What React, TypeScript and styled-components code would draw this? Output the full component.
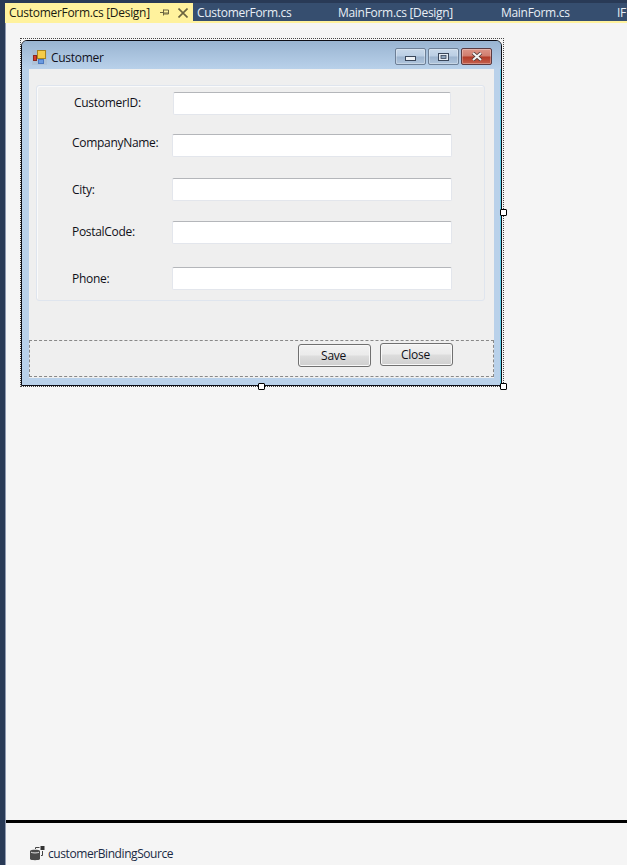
import * as React from "react";
import styled, { createGlobalStyle } from "styled-components";

const GlobalStyle = createGlobalStyle`
  html, body {
    margin: 0;
    padding: 0;
    height: 100%;
    background: #f5f5f5;
    font-family: "Open Sans", "Noto Sans", sans-serif;
    font-size: 12px;
    letter-spacing: -0.3px;
    color: #101018;
  }
`;

const Shell = styled.div`
  display: flex;
  width: 627px;
  height: 865px;
  overflow: hidden;
`;

const LeftRail = styled.div`
  width: 5px;
  flex: none;
  background: #293a56;
  border-right: 1px solid #8f9ab0;
`;

const Main = styled.div`
  flex: 1;
  min-width: 0;
  display: flex;
  flex-direction: column;
`;

const TabStrip = styled.div`
  display: flex;
  height: 20px;
  flex: none;
  background: #364e6f;
  border-top: 3px solid #293a56;
  box-shadow: inset 0 -2px 0 #fff29d;
  margin-left: -1px;
`;

const Tab = styled.div<{ $width: number; $active?: boolean }>`
  display: flex;
  align-items: center;
  flex: none;
  width: ${p => p.$width}px;
  height: 20px;
  padding-left: 4px;
  padding-bottom: 1px;
  box-sizing: border-box;
  white-space: nowrap;
  color: ${p => (p.$active ? "#1a1a10" : "#e8eef6")};
  background: ${p => (p.$active ? "#fff29d" : "transparent")};
`;

const TabIcons = styled.span`
  display: flex;
  align-items: center;
  margin-left: 10px;
  gap: 8px;
`;

const Designer = styled.div`
  flex: 1;
  padding: 15px 0 0 14px;
`;

const Frame = styled.div`
  position: relative;
  width: 484px;
  height: 349px;
  box-sizing: border-box;
  border: 1px dotted #444;
  padding: 1px 1px 0 0;
`;

const Handle = styled.div<{ $x: number; $y: number }>`
  position: absolute;
  left: ${p => p.$x}px;
  top: ${p => p.$y}px;
  width: 7px;
  height: 7px;
  box-sizing: border-box;
  background: #fff;
  border: 1px solid #000;
  border-radius: 1px;
`;

const Window = styled.div`
  height: 346px;
  box-sizing: border-box;
  border: 1px solid #0c0c14;
  border-radius: 6px 6px 0 0;
  background: #b9d1ea;
  box-shadow: inset -1px 0 0 #5fd0ea;
  display: flex;
  flex-direction: column;
  padding: 0 7px 7px 7px;
`;

const TitleBar = styled.div`
  display: flex;
  align-items: center;
  flex: none;
  height: 28px;
  box-sizing: border-box;
  margin: 0 -7px;
  padding: 4px 9px 0 10px;
  border-radius: 5px 5px 0 0;
  background: linear-gradient(#99b4d1, #b9d1ea);
`;

const TitleText = styled.span`
  margin-left: 4px;
  flex: 1;
  color: #10101c;
`;

const CaptionButtons = styled.div`
  display: flex;
  gap: 2px;
  margin-top: -1px;
`;

const CaptionButton = styled.div<{ $close?: boolean; $low?: boolean }>`
  width: 31px;
  height: 17px;
  box-sizing: border-box;
  display: flex;
  align-items: center;
  justify-content: center;
  padding-top: ${p => (p.$low ? 4 : 0)}px;
  border: 1px solid ${p => (p.$close ? "#5a3a40" : "#6d7f96")};
  border-radius: 2px;
  background: ${p =>
    p.$close
      ? "linear-gradient(#dc9587 0%, #d07c6d 48%, #b23a26 52%, #c4604e 100%)"
      : "linear-gradient(#c9d9ea 0%, #bacee4 48%, #9cb3ce 52%, #b0c5dd 100%)"};
  box-shadow: inset 0 0 0 1px rgba(255, 255, 255, 0.3);
`;

const Client = styled.div`
  flex: 1;
  background: #efefef;
  display: flex;
  flex-direction: column;
  padding-top: 16px;
`;

const GroupBox = styled.div`
  width: 449px;
  height: 216px;
  box-sizing: border-box;
  margin-left: 7px;
  border: 1px solid #dfe5ee;
  border-radius: 3px;
  box-shadow: inset 1px 1px 0 #fafafa;
  padding-top: 6px;
`;

const Row = styled.div<{ $top: number; $first?: boolean }>`
  display: flex;
  align-items: center;
  height: 23px;
  margin-top: ${p => p.$top}px;
  padding-left: ${p => (p.$first ? 37 : 35)}px;
`;

const FieldLabel = styled.label<{ $first?: boolean; $lift?: number }>`
  flex: none;
  width: ${p => (p.$first ? 99 : 100)}px;
  margin-bottom: ${p => p.$lift ?? 0}px;
`;

const TextBox = styled.div<{ $first?: boolean }>`
  flex: none;
  width: ${p => (p.$first ? 278 : 280)}px;
  height: 23px;
  box-sizing: border-box;
  background: #fff;
  border: 1px solid #e3e6ec;
  border-top-color: #b4b6ba;
  border-radius: 2px;
`;

const ButtonBar = styled.div`
  margin-top: 39px;
  height: 37px;
  box-sizing: border-box;
  border: 1px dashed #888;
  display: flex;
  padding-left: 268px;
  gap: 9px;
`;

const FormButton = styled.div<{ $top: number }>`
  width: 73px;
  height: 23px;
  margin-top: ${p => p.$top}px;
  box-sizing: border-box;
  display: flex;
  align-items: center;
  justify-content: center;
  padding-right: 2px;
  border: 1px solid #707070;
  border-radius: 3px;
  background: linear-gradient(#f2f2f2 0%, #ebebeb 48%, #dddddd 52%, #cfcfcf 100%);
  box-shadow: inset 0 0 0 1px #f8f8f8;
`;

const Divider = styled.div`
  flex: none;
  height: 3px;
  background: #000;
  margin-bottom: 20px;
`;

const Tray = styled.div`
  flex: none;
  display: flex;
  align-items: center;
  height: 22px;
  box-sizing: border-box;
  padding: 0 0 1px 24px;
  gap: 3px;
  color: #1a2a44;
  letter-spacing: -0.42px;
`;

const PinIcon = () => (
  <svg width="10" height="9" viewBox="0 0 10 9">
    <path d="M0 4.5h3M3.5 1.5v6M3.5 2h5v4h-5M3.5 5h5" fill="none" stroke="#6b6440" strokeWidth="1" />
  </svg>
);

const CloseIcon = () => (
  <svg width="10" height="10" viewBox="0 0 10 10">
    <path d="M0.5 0.5l9 9M9.5 0.5l-9 9" stroke="#6b6440" strokeWidth="1.6" />
  </svg>
);

const FormIcon = () => (
  <svg width="15" height="16" viewBox="0 0 15 16">
    <rect x="0" y="1" width="15" height="15" fill="#a9b4c0" opacity="0.35" />
    <rect x="1.5" y="6.5" width="3" height="5" fill="#d83a2a" stroke="#8a2a20" />
    <rect x="5.5" y="1.5" width="8" height="8" fill="#f6cc48" stroke="#a8841f" />
    <rect x="6.5" y="10.5" width="5" height="4" fill="#6a9ae0" stroke="#4a78c0" />
  </svg>
);

const BindingIcon = () => (
  <svg width="15" height="15" viewBox="0 0 15 15">
    <path d="M0 5c0-1.6 10-1.6 10 0v8c0 1.6-10 1.6-10 0z" fill="#4a4a4a" />
    <path d="M1 6.2c1.8 1 6.2 1 8 0" stroke="#e4e4e4" fill="none" />
    <rect x="10.5" y="0" width="4" height="4" fill="#333" />
    <path d="M5.5 3V1.5h4M12.5 5v4.5h-1.5" stroke="#444" fill="none" />
  </svg>
);

const fields = [
  { name: "CustomerID:", top: 0, first: true, lift: 2 },
  { name: "CompanyName:", top: 19, first: false, lift: 6 },
  { name: "City:", top: 21, first: false, lift: 1 },
  { name: "PostalCode:", top: 20, first: false, lift: 2 },
  { name: "Phone:", top: 23, first: false, lift: 1 },
];

const App = () => {
  return (
    <Shell>
      <GlobalStyle />
      <LeftRail />
      <Main>
        <TabStrip>
          <Tab $width={188} $active>
            CustomerForm.cs [Design]
            <TabIcons>
              <PinIcon />
              <CloseIcon />
            </TabIcons>
          </Tab>
          <Tab $width={141}>CustomerForm.cs</Tab>
          <Tab $width={163}>MainForm.cs [Design]</Tab>
          <Tab $width={116}>MainForm.cs</Tab>
          <Tab $width={20}>IF</Tab>
        </TabStrip>
        <Designer>
          <Frame>
            <Window>
              <TitleBar>
                <FormIcon />
                <TitleText>Customer</TitleText>
                <CaptionButtons>
                  <CaptionButton $low>
                    <svg width="11" height="5" viewBox="0 0 11 5">
                      <rect x="0.5" y="0.5" width="10" height="4" fill="#eef2f6" stroke="#39465a" />
                    </svg>
                  </CaptionButton>
                  <CaptionButton>
                    <svg width="11" height="8" viewBox="0 0 11 8">
                      <rect x="0.5" y="0.5" width="10" height="7" fill="#e4ebf3" stroke="#39465a" />
                      <rect x="3" y="2.5" width="5" height="3" fill="#8fa4bc" stroke="#39465a" strokeWidth="0.8" />
                    </svg>
                  </CaptionButton>
                  <CaptionButton $close>
                    <svg width="12" height="9" viewBox="0 0 12 9">
                      <path d="M2 1l8 7M10 1l-8 7" stroke="#47302e" strokeWidth="3.6" />
                      <path d="M2 1l8 7M10 1l-8 7" stroke="#f2f2f2" strokeWidth="2.2" />
                    </svg>
                  </CaptionButton>
                </CaptionButtons>
              </TitleBar>
              <Client>
                <GroupBox>
                  {fields.map(field => {
                    return (
                      <Row key={field.name} $top={field.top} $first={field.first}>
                        <FieldLabel $first={field.first} $lift={field.lift}>
                          {field.name}
                        </FieldLabel>
                        <TextBox $first={field.first} />
                      </Row>
                    );
                  })}
                </GroupBox>
                <ButtonBar>
                  <FormButton $top={3}>Save</FormButton>
                  <FormButton $top={2}>Close</FormButton>
                </ButtonBar>
              </Client>
            </Window>
            <Handle $x={237} $y={344} />
            <Handle $x={479} $y={344} />
            <Handle $x={479} $y={170} />
          </Frame>
        </Designer>
        <Divider />
        <Tray>
          <BindingIcon />
          customerBindingSource
        </Tray>
      </Main>
    </Shell>
  );
};

export default App;
